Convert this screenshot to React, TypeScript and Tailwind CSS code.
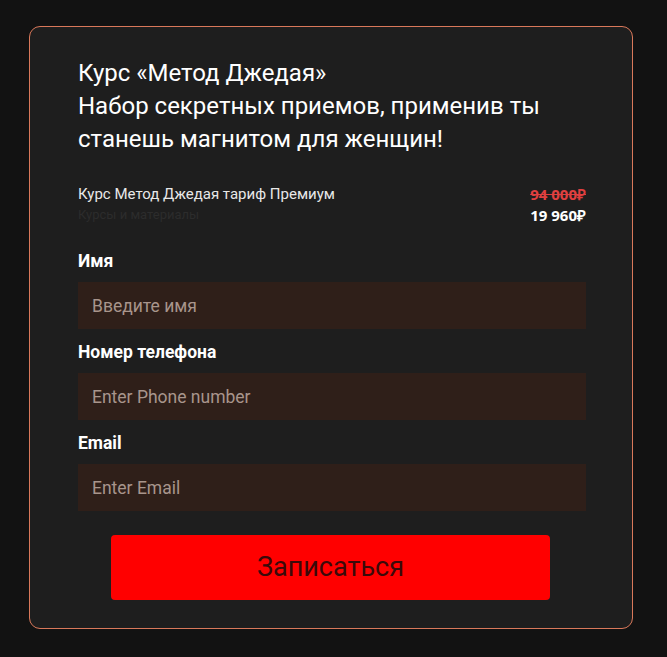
export default function App() {
  const fields = [
    { label: 'Имя', placeholder: 'Введите имя', type: 'text' },
    { label: 'Номер телефона', placeholder: 'Enter Phone number', type: 'tel' },
    { label: 'Email', placeholder: 'Enter Email', type: 'email' },
  ]

  return (
    <div className="min-h-[657px] bg-[#121212] pt-[26px] pl-[29px] pr-[34px] pb-[29px] font-['Roboto',sans-serif]">
      <div className="rounded-[11px] border border-[#d9785a] bg-[#1e1e1e] pl-[48px] pr-[46px] pt-[30px] pb-[28px]">
        <h1 className="text-[24px] leading-[33px] text-white">
          Курс «Метод Джедая»
          <br />
          Набор секретных приемов, применив ты станешь магнитом для женщин!
        </h1>

        <div className="mt-[28px] flex items-start justify-between">
          <div>
            <div className="text-[15px] leading-[20px] text-[#e8e8e8]">Курс Метод Джедая тариф Премиум</div>
            <div className="mt-[3px] text-[13px] leading-[16px] text-[#2c2c2c]">Курсы и материалы</div>
          </div>
          <div className="text-right font-['Open_Sans',sans-serif] text-[15px] font-bold leading-[21px]">
            <div className="text-[#e04040] line-through">94 000₽</div>
            <div className="text-white">19 960₽</div>
          </div>
        </div>

        <form className="mt-[23px]" onSubmit={(e) => e.preventDefault()}>
          {fields.map((f) => (
            <div key={f.label} className="mb-[11px]">
              <label className="block text-[17.5px] font-bold leading-[24px] text-white">{f.label}</label>
              <input
                type={f.type}
                placeholder={f.placeholder}
                className="mt-[9px] h-[47px] w-full bg-[#2f1f19] px-[14px] text-[17.5px] text-white placeholder:text-[#a8958c] focus:outline-none"
              />
            </div>
          ))}

          <div className="pl-[33px] pr-[36px] pt-[13px]">
            <button
              type="submit"
              className="h-[65px] w-full rounded-[4px] bg-[#ff0000] text-[27px] text-[#3a0a0a]"
            >
              Записаться
            </button>
          </div>
        </form>
      </div>
    </div>
  )
}
